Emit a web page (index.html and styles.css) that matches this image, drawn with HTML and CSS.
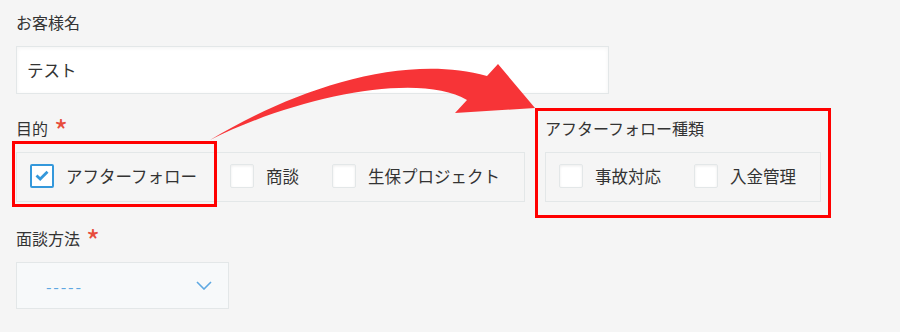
FILE: index.html
```html
<!DOCTYPE html>
<html lang="ja">

<head>
    <meta charset="UTF-8">
    <meta name="viewport" content="width=device-width, initial-scale=1.0">
    <title>お客様フォーム</title>
    <link rel="stylesheet" href="styles.css">
</head>

<body>

    <div class="page">
        <div class="field">
            <div class="label">お客様名</div>
            <div class="text-input">テスト</div>
        </div>

        <div class="row">
            <div class="field">
                <div class="label">目的<span class="req">*</span></div>
                <div class="check-group">
                    <div class="check-item">
                        <span class="box checked">
                            <svg width="14" height="11" viewBox="0 0 14 11">
                                <path d="M1.5 5.5 L5.2 9 L12.5 1.8" fill="none" stroke="#3498db" stroke-width="2.8" />
                            </svg>
                        </span>
                        アフターフォロー
                    </div>
                    <div class="check-item"><span class="box"></span>商談</div>
                    <div class="check-item"><span class="box"></span>生保プロジェクト</div>
                </div>
            </div>

            <div class="field">
                <div class="label">アフターフォロー種類</div>
                <div class="check-group">
                    <div class="check-item"><span class="box"></span>事故対応</div>
                    <div class="check-item"><span class="box"></span>入金管理</div>
                </div>
            </div>
        </div>

        <div class="field">
            <div class="label">面談方法<span class="req">*</span></div>
            <div class="select">
                <span class="placeholder">-----</span>
                <svg width="16" height="9" viewBox="0 0 16 9">
                    <path d="M1 1 L8 8 L15 1" fill="none" stroke="#5ea8e2" stroke-width="1.6" />
                </svg>
            </div>
        </div>

        <!-- annotations -->
        <div class="mark mark-purpose"></div>
        <div class="mark mark-type"></div>
        <svg class="arrow" width="900" height="332" viewBox="0 0 900 332">
            <path d="M210 140 C 290 92 400 52 487 76 L 498 64 L 535 108 L 455 113 L 467 100 C 420 72 300 95 210 140 Z"
                fill="#f73437" />
        </svg>
    </div>

</body>

</html>
```

FILE: styles.css
```css
* {
    box-sizing: border-box;
}

body {
    margin: 0;
    font-family: "Noto Sans CJK JP", "Noto Sans", sans-serif;
    background-color: #f5f5f5;
    color: #333;
}

.page {
    position: relative;
    width: 900px;
    height: 332px;
    padding: 10px 16px 0 16px;
    overflow: hidden;
}

.row {
    display: flex;
    gap: 20px;
    margin-bottom: 24px;
}

.field {
    margin-bottom: 22px;
}

.row .field {
    margin-bottom: 0;
}

.label {
    font-size: 16px;
    line-height: 24px;
    height: 24px;
    margin-bottom: 12px;
}

.req {
    color: #e74c3c;
    font-size: 30px;
    line-height: 0;
    margin-left: 6px;
    position: relative;
    top: 8px;
}

.text-input {
    width: 593px;
    height: 48px;
    padding: 0 10px;
    display: flex;
    align-items: center;
    font-size: 16.5px;
    background: #fff;
    border: 1px solid #e3e7e8;
    box-shadow: inset 0 1px 4px rgba(0, 0, 0, 0.05);
}

.check-group {
    display: flex;
    align-items: center;
    gap: 33px;
    height: 50px;
    padding: 0 24px 3px 13px;
    border: 1px solid #e3e7e8;
}

.check-item {
    display: flex;
    align-items: center;
    gap: 12px;
    font-size: 16.5px;
    line-height: 24px;
    white-space: nowrap;
}

.box {
    width: 24px;
    height: 24px;
    display: flex;
    align-items: center;
    justify-content: center;
    background: #fff;
    border: 1px solid #e3e7e8;
    border-radius: 2px;
    box-shadow: inset 0 1px 3px rgba(0, 0, 0, 0.08);
}

.box.checked {
    border: 2px solid #3498db;
    box-shadow: none;
}

.select {
    width: 213px;
    height: 47px;
    display: flex;
    align-items: center;
    justify-content: space-between;
    padding: 0 16px 0 29px;
    background: #f7f9fa;
    border: 1px solid #e3e7e8;
}

.placeholder {
    color: #5ea8e2;
    font-size: 16px;
    letter-spacing: 1.8px;
}

/* Annotation overlay */
.mark {
    position: absolute;
    border: 3px solid #f00;
}

.mark-purpose {
    left: 12px;
    top: 141px;
    width: 205px;
    height: 66px;
}

.mark-type {
    left: 535px;
    top: 108px;
    width: 296px;
    height: 110px;
}

.arrow {
    position: absolute;
    left: 0;
    top: 0;
    pointer-events: none;
}
```
